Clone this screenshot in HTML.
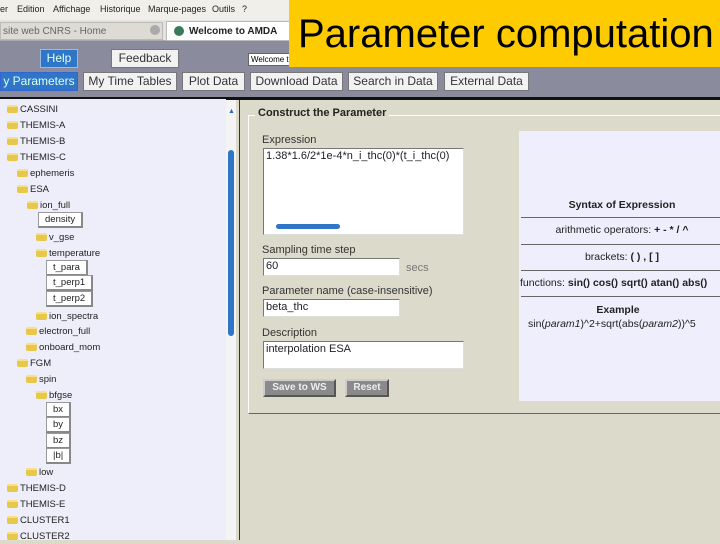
<!DOCTYPE html>
<html><head><meta charset="utf-8"><style>
*{margin:0;padding:0;box-sizing:border-box}
body{width:720px;height:540px;overflow:hidden;position:relative;font-family:"Liberation Sans",sans-serif;background:#dcdacb}
.a{position:absolute}
.menu{left:0;top:0;width:720px;height:20px;background:#f0efea;font-size:9px;color:#222}
.tabs{left:0;top:20px;width:720px;height:21px;background:#e4e2dc;border-bottom:1px solid #aaa}
.hdr{left:0;top:41px;width:720px;height:56px;background:#8b8b9e}
.btn{background:#f2f2f2;border:1px solid #777;font-size:12px;color:#333;text-align:center;line-height:17px}
.tree{left:0;top:99px;width:226px;height:441px;background:#eeeefa;font-size:9.5px;color:#222}
.tree div{position:absolute;height:14px;line-height:14px;white-space:nowrap}
.f{display:inline-block;width:11px;height:8px;background:#e8c84a;border-radius:2px;margin-right:2px;vertical-align:-1px;border-top:2px solid #f6e08a}
.leaf{background:#fff;border:1px solid #999;border-right:2px solid #888;border-bottom:2px solid #888;padding:0 6px;height:16px!important;line-height:13px!important}
.lbl{font-size:11px;color:#333}
.inp{background:#fff;border:1px solid #777;border-right-color:#ddd;border-bottom-color:#ddd;font-size:11px;color:#222;padding:1px 2px}
</style></head><body>
<div class="a menu"><span class="a" style="left:0;top:4px">er</span><span class="a" style="left:17px;top:4px">Edition</span><span class="a" style="left:53px;top:4px">Affichage</span><span class="a" style="left:100px;top:4px">Historique</span><span class="a" style="left:148px;top:4px">Marque-pages</span><span class="a" style="left:212px;top:4px">Outils</span><span class="a" style="left:242px;top:4px">?</span></div>
<div class="a tabs">
 <div class="a" style="left:0;top:2px;width:163px;height:18px;background:#dddbd4;border:1px solid #bbb;font-size:10px;color:#666;padding:3px 0 0 2px">site web CNRS - Home</div>
 <div class="a" style="left:150px;top:5px;width:10px;height:10px;border-radius:50%;background:#aaa"></div>
 <div class="a" style="left:166px;top:1px;width:130px;height:20px;background:#fff;border:1px solid #bbb;font-size:10px;font-weight:bold;color:#222;padding:4px 0 0 22px">Welcome to AMDA</div>
 <div class="a" style="left:174px;top:6px;width:10px;height:10px;border-radius:50%;background:#3a7a5a"></div>
</div>
<div class="a hdr"></div>
<div class="a btn" style="left:40px;top:49px;width:38px;height:19px;background:#2f76c8;color:#dfe;border-color:#9bd">Help</div>
<div class="a btn" style="left:111px;top:49px;width:68px;height:19px">Feedback</div>
<div class="a" style="left:248px;top:53px;width:45px;height:13px;background:#fff;border:1px solid #666;font-size:8px;line-height:11px;padding-left:2px">Welcome t</div>
<div class="a btn" style="left:0;top:72px;width:78px;height:19px;background:#2f76c8;color:#dfe;border-color:#36c">y Parameters</div>
<div class="a btn" style="left:83px;top:72px;width:94px;height:19px">My Time Tables</div>
<div class="a btn" style="left:182px;top:72px;width:63px;height:19px">Plot Data</div>
<div class="a btn" style="left:250px;top:72px;width:93px;height:19px">Download Data</div>
<div class="a btn" style="left:348px;top:72px;width:90px;height:19px">Search in Data</div>
<div class="a btn" style="left:444px;top:72px;width:85px;height:19px">External Data</div>
<div class="a" style="left:289px;top:0;width:431px;height:67px;background:#fecb00;font-size:40px;color:#000;padding:12px 0 0 9px;white-space:nowrap;letter-spacing:0px">Parameter computation</div>
<div class="a" style="left:0;top:97px;width:720px;height:3px;background:#111"></div>
<div class="a tree">
<div style="left:7px;top:4px"><span class="f"></span>CASSINI</div>
<div style="left:7px;top:20px"><span class="f"></span>THEMIS-A</div>
<div style="left:7px;top:36px"><span class="f"></span>THEMIS-B</div>
<div style="left:7px;top:52px"><span class="f"></span>THEMIS-C</div>
<div style="left:17px;top:68px"><span class="f"></span>ephemeris</div>
<div style="left:17px;top:84px"><span class="f"></span>ESA</div>
<div style="left:27px;top:100px"><span class="f"></span>ion_full</div>
<div class="leaf" style="left:38px;top:113px">density</div>
<div style="left:36px;top:132px"><span class="f"></span>v_gse</div>
<div style="left:36px;top:148px"><span class="f"></span>temperature</div>
<div class="leaf" style="left:46px;top:161px">t_para</div>
<div class="leaf" style="left:46px;top:176px">t_perp1</div>
<div class="leaf" style="left:46px;top:192px">t_perp2</div>
<div style="left:36px;top:211px"><span class="f"></span>ion_spectra</div>
<div style="left:26px;top:226px"><span class="f"></span>electron_full</div>
<div style="left:26px;top:242px"><span class="f"></span>onboard_mom</div>
<div style="left:17px;top:258px"><span class="f"></span>FGM</div>
<div style="left:26px;top:274px"><span class="f"></span>spin</div>
<div style="left:36px;top:290px"><span class="f"></span>bfgse</div>
<div class="leaf" style="left:46px;top:303px">bx</div>
<div class="leaf" style="left:46px;top:318px">by</div>
<div class="leaf" style="left:46px;top:334px">bz</div>
<div class="leaf" style="left:46px;top:349px">|b|</div>
<div style="left:26px;top:367px"><span class="f"></span>low</div>
<div style="left:7px;top:383px"><span class="f"></span>THEMIS-D</div>
<div style="left:7px;top:399px"><span class="f"></span>THEMIS-E</div>
<div style="left:7px;top:415px"><span class="f"></span>CLUSTER1</div>
<div style="left:7px;top:431px"><span class="f"></span>CLUSTER2</div>
</div>
<div class="a" style="left:226px;top:100px;width:10px;height:440px;background:#f4f4f4"></div>
<div class="a" style="left:228px;top:150px;width:6px;height:186px;background:#2f76c8;border-radius:3px"></div>
<div class="a" style="left:228px;top:108px;font-size:7px;color:#36c">▲</div>
<div class="a" style="left:236px;top:100px;width:3px;height:440px;background:#dcdacb"></div>
<div class="a" style="left:239px;top:100px;width:1px;height:440px;background:#333"></div>
<div class="a" style="left:248px;top:115px;width:480px;height:299px;border:1px solid #fff;border-bottom:1px solid #666;border-right:none"></div>
<div class="a" style="left:255px;top:107px;background:#dcdacb;padding:0 3px;font-size:11px;font-weight:bold;color:#222">Construct the Parameter</div>
<div class="a lbl" style="left:262px;top:134px">Expression</div>
<div class="a inp" style="left:263px;top:148px;width:201px;height:87px">1.38*1.6/2*1e-4*n_i_thc(0)*(t_i_thc(0)</div>
<div class="a" style="left:276px;top:224px;width:64px;height:5px;background:#2f76c8;border-radius:3px"></div>
<div class="a lbl" style="left:262px;top:244px">Sampling time step</div>
<div class="a inp" style="left:263px;top:258px;width:137px;height:18px">60</div>
<div class="a lbl" style="left:406px;top:262px;color:#777">secs</div>
<div class="a lbl" style="left:262px;top:285px">Parameter name (case-insensitive)</div>
<div class="a inp" style="left:263px;top:299px;width:137px;height:18px">beta_thc</div>
<div class="a lbl" style="left:262px;top:327px">Description</div>
<div class="a inp" style="left:263px;top:341px;width:201px;height:28px">interpolation ESA</div>
<div class="a" style="left:263px;top:379px;width:73px;height:18px;background:#8a8a8a;border:2px solid #555;border-top-color:#ccc;border-left-color:#ccc;font-size:10px;font-weight:bold;color:#eee;text-align:center;line-height:14px">Save to WS</div>
<div class="a" style="left:345px;top:379px;width:44px;height:18px;background:#8a8a8a;border:2px solid #555;border-top-color:#ccc;border-left-color:#ccc;font-size:10px;font-weight:bold;color:#eee;text-align:center;line-height:14px">Reset</div>
<div class="a" style="left:519px;top:131px;width:201px;height:270px;background:#eeeefc;font-size:10.5px;color:#222;text-align:center">
 <div class="a" style="left:0;top:68px;width:206px;font-weight:bold">Syntax of Expression</div>
 <div class="a" style="left:2px;top:86px;width:200px;height:1px;background:#666"></div>
 <div class="a" style="left:0;top:93px;width:206px">arithmetic operators: <b>+ - * / ^</b></div>
 <div class="a" style="left:2px;top:113px;width:200px;height:1px;background:#666"></div>
 <div class="a" style="left:0;top:120px;width:206px">brackets: <b>( ) , [ ]</b></div>
 <div class="a" style="left:2px;top:139px;width:200px;height:1px;background:#666"></div>
 <div class="a" style="left:1px;top:146px;width:220px;text-align:left;white-space:nowrap">functions: <b>sin() cos() sqrt() atan() abs()</b></div>
 <div class="a" style="left:2px;top:165px;width:200px;height:1px;background:#666"></div>
 <div class="a" style="left:0;top:173px;width:198px;font-weight:bold">Example</div>
 <div class="a" style="left:9px;top:187px;width:220px;text-align:left;white-space:nowrap">sin(<i>param1</i>)^2+sqrt(abs(<i>param2</i>))^5</div>
</div>
</body></html>
